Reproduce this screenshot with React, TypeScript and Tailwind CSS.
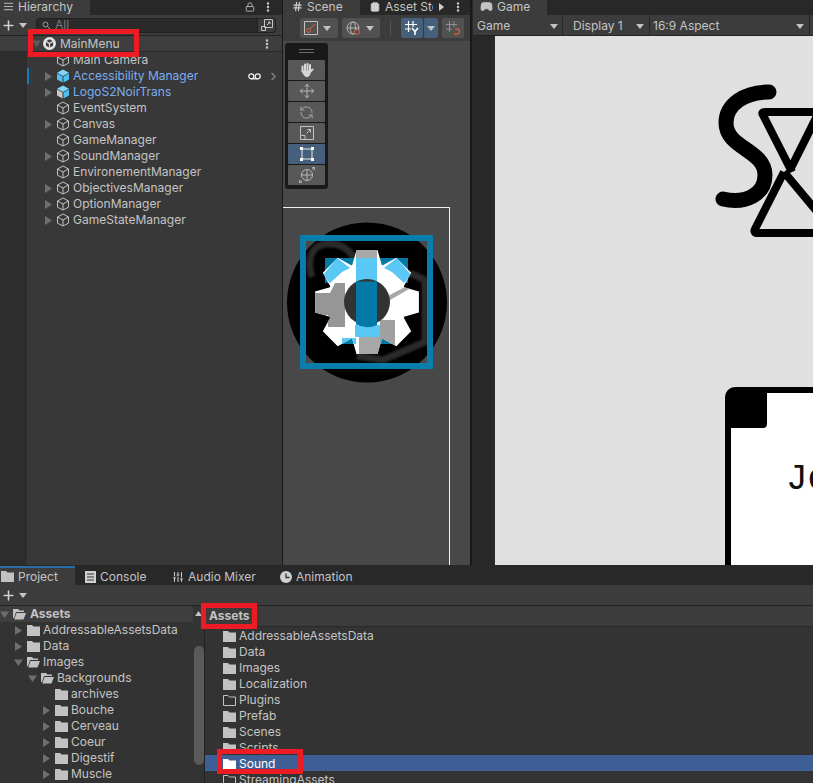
import { AlignJustify, ChevronRight, Lock, Move, MoreVertical, Plus, RefreshCcw, ShoppingBag, Hash, Gamepad2, SlidersVertical } from "lucide-react";

const Caret = ({ open = false, dim = false }: { open?: boolean; dim?: boolean }) => (
  <svg width="9" height="9" viewBox="0 0 9 9" className="shrink-0">
    {open ? (
      <path d="M0 1.5h9L4.500 8z" fill={dim ? "#5c5c5c" : "#6e6e6e"} />
    ) : (
      <path d="M1 0l7 4.500L1 9z" fill="#6e6e6e" />
    )}
  </svg>
);

const DropArrow = ({ color = "#c4c4c4" }: { color?: string }) => (
  <svg width="8" height="5" viewBox="0 0 8 5" className="shrink-0">
    <path d="M0 0h8L4 5z" fill={color} />
  </svg>
);

const CubeOutline = () => (
  <svg width="14" height="14" viewBox="0 0 14 14" fill="none" stroke="#c2c2c2" strokeWidth="1" className="shrink-0">
    <path d="M7 1l5.500 3v6.200L7 13 1.500 10.200V4z" />
    <path d="M1.500 4L7 7l5.500-3M7 7v6" />
  </svg>
);

const CubeBlue = ({ split = false }: { split?: boolean }) => (
  <svg width="14" height="14" viewBox="0 0 14 14" className="shrink-0">
    <path d="M7 .5l6 3.200L7 7 1 3.700z" fill="#7fd6fb" />
    <path d="M1 4.500l5.500 3V13.500L1 10.500z" fill={split ? "#c8c8c8" : "#4fc1f1"} />
    <path d="M13 4.500l-5.500 3V13.500L13 10.500z" fill="#4fc1f1" />
  </svg>
);

const Folder = ({ open = false, outline = false, color = "#c2c2c2" }: { open?: boolean; outline?: boolean; color?: string }) => (
  <svg width="13" height="11" viewBox="0 0 13 11" className="shrink-0">
    {outline ? (
      <path d="M.5.5h4.500l1.500 1.500h6v8.500H.5z" fill="none" stroke={color} />
    ) : open ? (
      <>
        <path d="M0 0h5l1.500 1.500H11V3H3L1 9H0z" fill={color} />
        <path d="M3.500 4H13l-2.500 6.500H1.200z" fill={color} />
      </>
    ) : (
      <path d="M0 0h5l1.500 1.500H13V11H0z" fill={color} />
    )}
  </svg>
);

const UnityLogo = () => (
  <svg width="13" height="13" viewBox="0 0 14 14" className="shrink-0">
    <circle cx="7" cy="7" r="7" fill="#e4e4e4" />
    <path d="M7 2.500l3.800 2.200v4.600L7 11.500 3.200 9.300V4.700z" fill="#3e3e3e" />
    <path d="M7 7l3.800-2.300M7 7v4.500M7 7L3.200 4.700" stroke="#e4e4e4" strokeWidth="1.300" />
  </svg>
);

const hierarchyRows = [
  { name: "Main Camera" },
  { name: "Accessibility Manager", caret: true, prefab: true, active: true },
  { name: "LogoS2NoirTrans", caret: true, prefab: true, split: true },
  { name: "EventSystem" },
  { name: "Canvas", caret: true },
  { name: "GameManager" },
  { name: "SoundManager", caret: true },
  { name: "EnvironementManager" },
  { name: "ObjectivesManager", caret: true },
  { name: "OptionManager", caret: true },
  { name: "GameStateManager", caret: true },
];

const RedBox = ({ className }: { className: string }) => (
  <div className={`absolute border-[5px] border-[#ed1c24] pointer-events-none ${className}`} />
);

const Hierarchy = () => (
  <div className="w-[282px] shrink-0 flex flex-col bg-[#383838]">
    <div className="h-[15px] flex bg-[#282828] items-center shrink-0">
      <div className="w-[90px] h-full bg-[#3c3c3c] flex items-center pl-[3px] pb-[2px] gap-[4px]">
        <AlignJustify size={11} color="#c4c4c4" />
        <span>Hierarchy</span>
      </div>
      <div className="ml-auto flex items-center gap-[7px] pr-[8px] pb-[2px]">
        <Lock size={10} color="#c4c4c4" />
        <MoreVertical size={12} color="#d0d0d0" strokeWidth={3} />
      </div>
    </div>
    <div className="h-[21px] bg-[#3c3c3c] flex items-center shrink-0 border-b border-[#232323]">
      <Plus size={15} color="#d0d0d0" strokeWidth={2.500} className="ml-[1px]" />
      <div className="ml-[3px]">
        <DropArrow />
      </div>
      <div className="ml-[9px] w-[240px] h-[15px] bg-[#2a2a2a] rounded-[3px] border border-[#212121] flex items-center pl-[5px] text-[#7a7a7a] gap-[4px]">
        <svg width="9" height="9" viewBox="0 0 9 9" fill="none" stroke="#a0a0a0" className="shrink-0">
          <circle cx="3.500" cy="3.500" r="2.500" />
          <path d="M5.500 5.500L8 8" />
        </svg>
        <span>All</span>
        <div className="ml-auto w-[18px] h-full border-l border-[#212121] bg-[#3c3c3c] rounded-r-[3px] flex items-center justify-center">
          <svg width="12" height="12" viewBox="0 0 12 12" fill="none" stroke="#c4c4c4">
            <path d="M3.500.5h8v8h-8zM.5 7.500h4v4h-4zM6 6l3-3M7 3h2v2" />
          </svg>
        </div>
      </div>
    </div>
    <div className="h-[16px] bg-[#3e3e3e] border-b border-[#2a2a2a] flex items-center shrink-0 pl-[32px]">
      <div className="mr-[2px] flex">
        <Caret open dim />
      </div>
      <UnityLogo />
      <span className="ml-[4px]">MainMenu</span>
      <MoreVertical size={12} color="#d0d0d0" strokeWidth={3} className="ml-auto mr-[9px]" />
    </div>
    <div className="flex-1 flex min-h-0">
      <div className="w-[27px] bg-[#2d2d2d] shrink-0" />
      <div className="flex-1 flex flex-col min-w-0">
        {hierarchyRows.map((row) => (
          <div key={row.name} className="h-[16px] flex items-center shrink-0 relative">
            {row.active && <div className="absolute left-0 top-0 bottom-0 w-[2px] bg-[#0f7ebd]" />}
            <div className="w-[12px] ml-[17px] shrink-0 flex">{row.caret && <Caret />}</div>
            <div className="flex items-center gap-[3px]">
              {row.prefab ? <CubeBlue split={row.split} /> : <CubeOutline />}
              <span className={row.prefab ? "text-[#7badf0]" : ""}>{row.name}</span>
            </div>
            {row.active && (
              <div className="ml-auto flex items-center gap-[6px] pr-[2px]">
                <svg width="13" height="7" viewBox="0 0 13 7" fill="none" stroke="#eeeeee" strokeWidth="1.300">
                  <circle cx="3.300" cy="3.300" r="2.500" />
                  <circle cx="9.700" cy="3.300" r="2.500" />
                  <path d="M3.300 5.800h6.400" />
                </svg>
                <ChevronRight size={13} color="#8a8a8a" />
              </div>
            )}
          </div>
        ))}
      </div>
    </div>
  </div>
);

const ToolButton = ({ children, active = false }: { children: React.ReactNode; active?: boolean }) => (
  <div className={`h-[20px] flex items-center justify-center rounded-[1px] ${active ? "bg-[#46607c]" : "bg-[#585858]"}`}>
    {children}
  </div>
);

const gearPoints = () => {
  const cx = 367;
  const cy = 302;
  const pts: string[] = [];
  for (let i = 0; i < 8; i++) {
    const a = (i * Math.PI) / 4;
    const spread = [
      [-0.38, 40],
      [-0.2, 53],
      [0.2, 53],
      [0.38, 40],
    ];
    spread.forEach(([d, r]) => {
      pts.push(`${(cx + r * Math.cos(a + d)).toFixed(1)},${(cy + r * Math.sin(a + d)).toFixed(1)}`);
    });
  }
  return pts.join(" ");
};

const SceneGizmo = () => (
  <svg width="167" height="180" viewBox="283 208 167 180" className="absolute left-0 top-[167px]">
    <defs>
      <clipPath id="gear">
        <polygon points={gearPoints()} />
      </clipPath>
      <filter id="soft">
        <feGaussianBlur stdDeviation="1.200" />
      </filter>
    </defs>
    <circle cx="367" cy="302.500" r="80" fill="#000000" />
    <g fill="none" stroke="#2c2c2c" strokeWidth="7" filter="url(#soft)">
      <path d="M312 277c-6-18 0-32 14-33 12-1 22 4 28 14" />
      <path d="M410 273l15 7v62l-42 18-26-4" />
    </g>
    <rect x="325" y="258" width="83" height="25" fill="#0579a5" />
    <rect x="340" y="338" width="53" height="6" fill="#0579a5" />
    <polygon points={gearPoints()} fill="#ffffff" />
    <g clipPath="url(#gear)">
      <path d="M310 293h20l5-10h10v44h-17v-12h-18z" fill="#969696" />
      <path d="M323 275l14-17 13 10-8 4-12 11zM411 275l-14-17-13 10 8 4 12 11z" fill="#5ac8f5" />
      <path d="M380 320h15v25h-15z" fill="#a0a0a0" />
      <path d="M390 300l28-16v-4l-32 17z" fill="#a8a8a8" />
      <rect x="356" y="258" width="21" height="70" fill="#5ac8f5" />
      <rect x="355" y="325" width="25" height="12" fill="#5ac8f5" />
      <rect x="342" y="338" width="14" height="6" fill="#5ac8f5" />
      <rect x="356" y="250" width="21" height="8" fill="#a8a8a8" />
      <rect x="359" y="337" width="21" height="18" fill="#a8a8a8" />
    </g>
    <circle cx="367" cy="302" r="23" fill="#333333" />
    <path d="M356 281.500h21v43.500a23 23 0 0 1-21-1z" fill="#0579a5" />
    <rect x="303" y="238" width="127" height="128" fill="none" stroke="#0a7eab" strokeWidth="6" />
  </svg>
);

const SceneTools = () => (
  <div className="absolute left-[2px] top-[2px] w-[43px] h-[146px] bg-[#191919] rounded-[3px] px-[3px] flex flex-col gap-px">
    <div className="h-[16px] flex flex-col justify-center gap-[2px] px-[11px] shrink-0">
      <div className="h-px bg-[#6e6e6e]" />
      <div className="h-px bg-[#6e6e6e]" />
    </div>
    <ToolButton>
      <svg width="16" height="16" viewBox="0 0 16 16" fill="none" stroke="#d8d8d8" strokeLinecap="round">
        <path d="M3.500 4.500v5M6 2.500v6M8.500 2v6.500M11 3v6" strokeWidth="2" />
        <path d="M3.500 9L3 8M4 9h7v2c0 2-1 3.500-3 3.500S5 13.500 4 11z" fill="#d8d8d8" strokeWidth="1" />
        <path d="M11 10l2.500-2.500" strokeWidth="2" />
      </svg>
    </ToolButton>
    <ToolButton>
      <Move size={16} color="#b8b8b8" strokeWidth={1.500} />
    </ToolButton>
    <ToolButton>
      <RefreshCcw size={15} color="#b8b8b8" strokeWidth={1.300} />
    </ToolButton>
    <ToolButton>
      <svg width="14" height="14" viewBox="0 0 14 14" fill="none" stroke="#c4c4c4">
        <path d="M.5 9V.5h13v13H5M.5 9.500h4.500v4H.5zM6.500 7.500l4-4M7.500 3.500h3v3" />
      </svg>
    </ToolButton>
    <ToolButton active>
      <svg width="14" height="14" viewBox="0 0 14 14" fill="none">
        <path d="M2 2h10v10H2z" stroke="#e8e8e8" />
        <path d="M0 0h3v3H0zM11 0h3v3h-3zM0 11h3v3H0zM11 11h3v3h-3z" fill="#ffffff" />
      </svg>
    </ToolButton>
    <ToolButton>
      <svg width="16" height="16" viewBox="0 0 16 16" fill="none" stroke="#b8b8b8">
        <circle cx="8" cy="8" r="5.500" />
        <path d="M2.500 8h11M8 2.500v11M0 16l3-1-2-2zM16 0l-3 1 2 2z" />
      </svg>
    </ToolButton>
  </div>
);

const ToolbarChip = ({ children, active = false, className = "" }: { children: React.ReactNode; active?: boolean; className?: string }) => (
  <div className={`h-[20px] rounded-[2px] flex items-center ${active ? "bg-[#46607c]" : "bg-[#515151]"} ${className}`}>{children}</div>
);

const Scene = () => (
  <div className="w-[187px] shrink-0 ml-px flex flex-col bg-[#3c3c3c] overflow-hidden">
    <div className="h-[15px] flex bg-[#282828] shrink-0 items-center">
      <div className="w-[77px] h-full bg-[#3c3c3c] flex items-center pl-[9px] pb-[2px] gap-[4px]">
        <Hash size={11} color="#d0d0d0" strokeWidth={2.500} />
        <span>Scene</span>
      </div>
      <div className="flex items-center pl-[10px] pb-[2px] gap-[5px] overflow-hidden w-[73px] whitespace-nowrap">
        <ShoppingBag size={10} color="#d0d0d0" fill="#d0d0d0" className="shrink-0" />
        <span>Asset Store</span>
      </div>
      <svg width="5" height="8" viewBox="0 0 5 8" className="shrink-0 ml-[6px] mb-[2px]">
        <path d="M0 0l5 4-5 4z" fill="#d0d0d0" />
      </svg>
      <MoreVertical size={12} color="#d0d0d0" strokeWidth={3} className="ml-[8px] mb-[2px]" />
    </div>
    <div className="h-[26px] flex items-center shrink-0 pl-[17px]">
      <ToolbarChip className="w-[38px] px-[4px] gap-[5px]">
        <svg width="14" height="14" viewBox="0 0 14 14" fill="none" className="shrink-0">
          <path d="M.5.5h13v13H.5z" stroke="#c4c4c4" />
          <circle cx="4.500" cy="9.500" r="2" stroke="#e0603a" />
          <path d="M6 8l5-5" stroke="#e0603a" />
        </svg>
        <DropArrow />
      </ToolbarChip>
      <ToolbarChip className="w-[38px] ml-[4px] px-[4px] gap-[5px]">
        <svg width="15" height="15" viewBox="0 0 15 15" fill="none" stroke="#b8b8b8" className="shrink-0">
          <circle cx="7" cy="7" r="6" />
          <ellipse cx="7" cy="7" rx="2.500" ry="6" />
          <path d="M1 7h12" />
          <circle cx="11" cy="11" r="2.500" stroke="#e0603a" fill="#515151" />
        </svg>
        <DropArrow />
      </ToolbarChip>
      <div className="w-px h-[16px] bg-[#555555] ml-[10px] mr-[10px]" />
      <ToolbarChip active className="w-[22px] justify-center">
        <svg width="14" height="14" viewBox="0 0 14 14" fill="none" stroke="#ffffff" strokeWidth="1.200">
          <path d="M3.500 0v11M8 0v6M0 3.500h12M0 8h6" />
          <path d="M7 7l3 3.500L13 7M10 10v4" strokeWidth="1.600" />
        </svg>
      </ToolbarChip>
      <ToolbarChip active className="w-[14px] ml-px justify-center">
        <DropArrow />
      </ToolbarChip>
      <ToolbarChip className="w-[22px] ml-[4px] justify-center">
        <svg width="14" height="14" viewBox="0 0 14 14" fill="none" stroke="#909090">
          <path d="M3.500 0v11M8 0v6M0 3.500h11M0 8h6" />
          <path d="M8 13h3a2 2 0 0 0 0-5H9" stroke="#d0603a" strokeWidth="1.300" />
        </svg>
      </ToolbarChip>
    </div>
    <div className="flex-1 relative bg-[#484848] min-h-0 overflow-hidden">
      <SceneTools />
      <div className="absolute left-0 top-[166px] w-[167px] bottom-0 border-t border-r border-[#f0f0f0]" />
      <SceneGizmo />
    </div>
  </div>
);

const Game = () => (
  <div className="flex-1 ml-[2px] flex flex-col bg-[#282828] min-w-0">
    <div className="h-[15px] shrink-0 flex items-center">
      <div className="w-[74px] ml-px h-full bg-[#3c3c3c] flex items-center pl-[7px] pb-[2px] gap-[4px]">
        <Gamepad2 size={13} color="#c4c4c4" fill="#c4c4c4" />
        <span>Game</span>
      </div>
    </div>
    <div className="h-[21px] bg-[#3c3c3c] border-b border-[#232323] flex items-center shrink-0 ml-px">
      <div className="w-[90px] h-full flex items-center pl-[4px] pr-[4px] pt-[2px] border-r border-[#262626] justify-between">
        <span>Game</span>
        <DropArrow />
      </div>
      <div className="w-[87px] h-full flex items-center pl-[10px] pr-[5px] pt-[2px] border-r border-[#262626] justify-between">
        <span>Display 1</span>
        <DropArrow />
      </div>
      <div className="w-[160px] h-full flex items-center pl-[3px] pr-[5px] pt-[2px] border-r border-[#262626] justify-between">
        <span>16:9 Aspect</span>
        <DropArrow />
      </div>
    </div>
    <div className="flex-1 flex min-h-0">
      <div className="w-[23px] shrink-0" />
      <div className="flex-1 bg-[#e0e0e0] relative overflow-hidden">
        <svg width="120" height="170" viewBox="710 78 120 170" fill="none" stroke="#000000" className="absolute left-[215px] top-[42px]">
          <path d="M769 92C745 92 726 104 726 123C726 148 765 150 765 175C765 195 745 204 723 199" strokeWidth="15" strokeLinecap="round" />
          <path d="M792 172L763 115Q761 112 765 112H819L790 170" strokeWidth="8" strokeLinejoin="round" />
          <path d="M784 172L755 229Q753 233 758 233H835L784 172" strokeWidth="8" strokeLinejoin="round" />
        </svg>
        <div className="absolute left-[230px] top-[351px] w-[120px] h-[250px] bg-white border-[6px] border-black rounded-tl-[10px]">
          <div className="absolute left-0 top-0 w-[36px] h-[35px] bg-black rounded-br-[4px]" />
          <div className="mt-[67px] ml-[55px] text-[36px] leading-[40px] text-[#111111] font-['Liberation_Mono',monospace] whitespace-nowrap">Jo</div>
        </div>
      </div>
    </div>
  </div>
);

const treeRows = [
  { name: "AddressableAssetsData", depth: 1, caret: true },
  { name: "Data", depth: 1, caret: true },
  { name: "Images", depth: 1, caret: true, open: true },
  { name: "Backgrounds", depth: 2, caret: true, open: true },
  { name: "archives", depth: 3 },
  { name: "Bouche", depth: 3, caret: true },
  { name: "Cerveau", depth: 3, caret: true },
  { name: "Coeur", depth: 3, caret: true },
  { name: "Digestif", depth: 3, caret: true },
  { name: "Muscle", depth: 3, caret: true },
];

const assetRows = [
  { name: "AddressableAssetsData" },
  { name: "Data" },
  { name: "Images" },
  { name: "Localization" },
  { name: "Plugins", outline: true },
  { name: "Prefab" },
  { name: "Scenes" },
  { name: "Scripts" },
  { name: "Sound", selected: true },
  { name: "StreamingAssets", outline: true },
];

const indent: Record<number, string> = { 1: "pl-[14px]", 2: "pl-[28px]", 3: "pl-[42px]" };

const ProjectTab = ({ label, icon, active = false, className }: { label: string; icon: React.ReactNode; active?: boolean; className: string }) => (
  <div className={`h-full flex items-center gap-[4px] ${className} ${active ? "bg-[#3c3c3c] border-t-2 border-[#2a6ea8]" : "pt-[2px]"}`}>
    {icon}
    <span>{label}</span>
  </div>
);

const ProjectPanel = () => (
  <div className="h-[218px] shrink-0 flex flex-col bg-[#282828]">
    <div className="h-[19px] mt-px flex shrink-0">
      <ProjectTab active className="w-[75px] pl-px" label="Project" icon={<Folder />} />
      <ProjectTab
        className="w-[85px] pl-[10px]"
        label="Console"
        icon={
          <svg width="11" height="12" viewBox="0 0 11 12" className="shrink-0">
            <path d="M0 0h11v12H0z" fill="#d0d0d0" />
            <path d="M2 3h7M2 6h7M2 9h7" stroke="#333333" />
          </svg>
        }
      />
      <ProjectTab className="w-[110px] pl-[12px]" label="Audio Mixer" icon={<SlidersVertical size={12} color="#d0d0d0" />} />
      <ProjectTab
        className="w-[90px] pl-[10px]"
        label="Animation"
        icon={
          <svg width="12" height="12" viewBox="0 0 12 12" className="shrink-0">
            <circle cx="6" cy="6" r="6" fill="#d0d0d0" />
            <path d="M6 2.500V6.500H9.500" fill="none" stroke="#333333" strokeWidth="1.300" />
          </svg>
        }
      />
    </div>
    <div className="h-[21px] bg-[#3c3c3c] border-b border-[#232323] flex items-center shrink-0">
      <Plus size={15} color="#d0d0d0" strokeWidth={2.500} className="ml-[1px]" />
      <div className="ml-[3px]">
        <DropArrow />
      </div>
    </div>
    <div className="flex-1 flex bg-[#333333] min-h-0 overflow-hidden">
      <div className="w-[193px] shrink-0 flex flex-col">
        <div className="h-[16px] bg-[#3e3e3e] flex items-center shrink-0 font-bold">
          <Caret open />
          <div className="ml-[4px] mr-[4px] flex">
            <Folder open />
          </div>
          <span>Assets</span>
        </div>
        {treeRows.map((row) => (
          <div key={row.name} className={`h-[16px] flex items-center shrink-0 ${indent[row.depth]}`}>
            <div className="w-[13px] shrink-0 flex">{row.caret && <Caret open={row.open} />}</div>
            <div className="mr-[3px] flex">
              <Folder open={row.open} />
            </div>
            <span>{row.name}</span>
          </div>
        ))}
      </div>
      <div className="w-[12px] shrink-0 border-r border-[#222222] flex flex-col items-center">
        <svg width="7" height="5" viewBox="0 0 7 5" className="mt-[5px]">
          <path d="M0 5h7L3.500 0z" fill="#c4c4c4" />
        </svg>
        <div className="w-[10px] h-[119px] rounded-[5px] bg-[#5a5a5a] mt-[30px]" />
      </div>
      <div className="flex-1 flex flex-col min-w-0">
        <div className="h-[21px] bg-[#3c3c3c] shrink-0 border-b border-[#2a2a2a] flex items-center pl-[4px] pb-px font-bold">Assets</div>
        {assetRows.map((row) => (
          <div
            key={row.name}
            className={`h-[16px] pt-[2px] flex items-center shrink-0 pl-[18px] gap-[3px] ${row.selected ? "bg-[#3e5f96] text-white" : ""}`}
          >
            <Folder outline={row.outline} color={row.selected ? "#ffffff" : "#c2c2c2"} />
            <span>{row.name}</span>
          </div>
        ))}
      </div>
    </div>
  </div>
);

export default function App() {
  return (
    <div className="relative w-[813px] h-[783px] overflow-hidden bg-[#191919] text-[12px] leading-[16px] text-[#c4c4c4] font-['Inter',sans-serif] flex flex-col">
      <div className="h-[565px] shrink-0 flex">
        <Hierarchy />
        <Scene />
        <Game />
      </div>
      <ProjectPanel />
      <RedBox className="left-[28px] top-[29px] w-[111px] h-[28px]" />
      <RedBox className="left-[201px] top-[603px] w-[56px] h-[26px]" />
      <RedBox className="left-[217px] top-[749px] w-[86px] h-[25px]" />
    </div>
  );
}
